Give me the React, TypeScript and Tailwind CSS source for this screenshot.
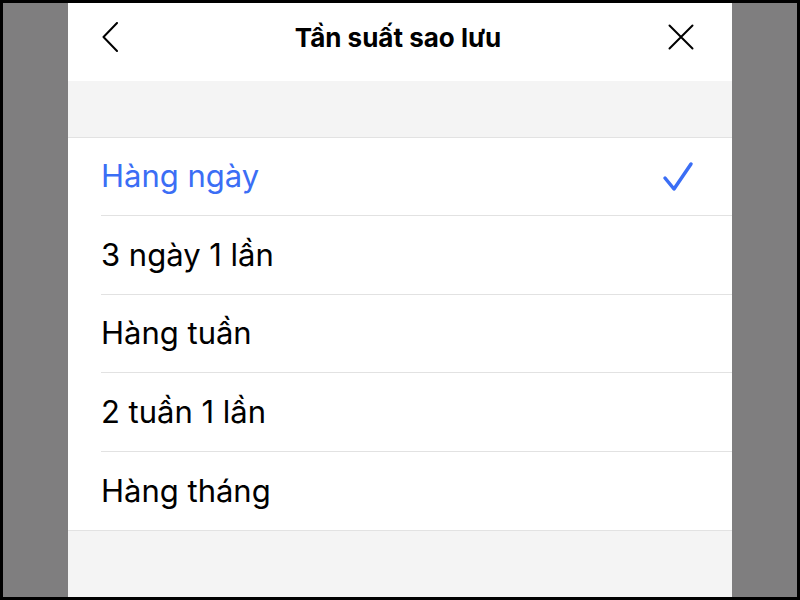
import React from 'react';

const options = ['Hàng ngày', '3 ngày 1 lần', 'Hàng tuần', '2 tuần 1 lần', 'Hàng tháng'];

export default function App() {
  const selected = 0;

  return (
    <div className="w-[800px] h-[600px] bg-black p-[3px] overflow-hidden" style={{ fontFamily: 'Inter, "Noto Sans", sans-serif' }}>
      <div className="flex h-full bg-[#7f7e7f]">
        <div className="w-[65px] shrink-0" />

        {/* Sheet */}
        <div className="w-[664px] shrink-0 flex flex-col bg-[#f4f4f4]">
          {/* Header */}
          <div className="relative h-[78px] shrink-0 bg-white flex items-center justify-between pl-[34px] pr-[38px] pb-[10px]">
            <button className="w-[26px] h-[30px] flex items-center" aria-label="Back">
              <svg width="16" height="30" viewBox="0 0 16 30" fill="none">
                <path d="M15 1L1.5 15L15 29" stroke="#000" strokeWidth="2" strokeLinecap="round" strokeLinejoin="round" />
              </svg>
            </button>
            <h1 className="text-[26px] font-bold text-black">Tần suất sao lưu</h1>
            <button className="w-[26px] h-[26px] flex items-center justify-center" aria-label="Close">
              <svg width="26" height="26" viewBox="0 0 26 26" fill="none">
                <path d="M1.5 1.5L24.5 24.5M24.5 1.5L1.5 24.5" stroke="#000" strokeWidth="2" strokeLinecap="round" />
              </svg>
            </button>
          </div>

          {/* Spacer band */}
          <div className="h-[57px] shrink-0 border-b border-[#e2e2e2]" />

          {/* Options */}
          <ul className="bg-white border-b border-[#e2e2e2]">
            {options.map((label, i) => (
              <li key={label} className="pl-[33px]">
                <div
                  className={`h-[78.4px] flex items-center justify-between pr-[38px] ${
                    i < options.length - 1 ? 'border-b border-[#e2e2e2]' : ''
                  }`}
                >
                  <span className={`text-[31px] ${i === selected ? 'text-[#3b6ef5]' : 'text-black'}`}>{label}</span>
                  {i === selected && (
                    <svg width="32" height="32" viewBox="0 0 32 32" fill="none">
                      <path d="M3 17L12 28L29 3" stroke="#3b6ef5" strokeWidth="3.5" strokeLinecap="round" strokeLinejoin="round" />
                    </svg>
                  )}
                </div>
              </li>
            ))}
          </ul>

          <div className="flex-1" />
        </div>

        <div className="flex-1" />
      </div>
    </div>
  );
}
